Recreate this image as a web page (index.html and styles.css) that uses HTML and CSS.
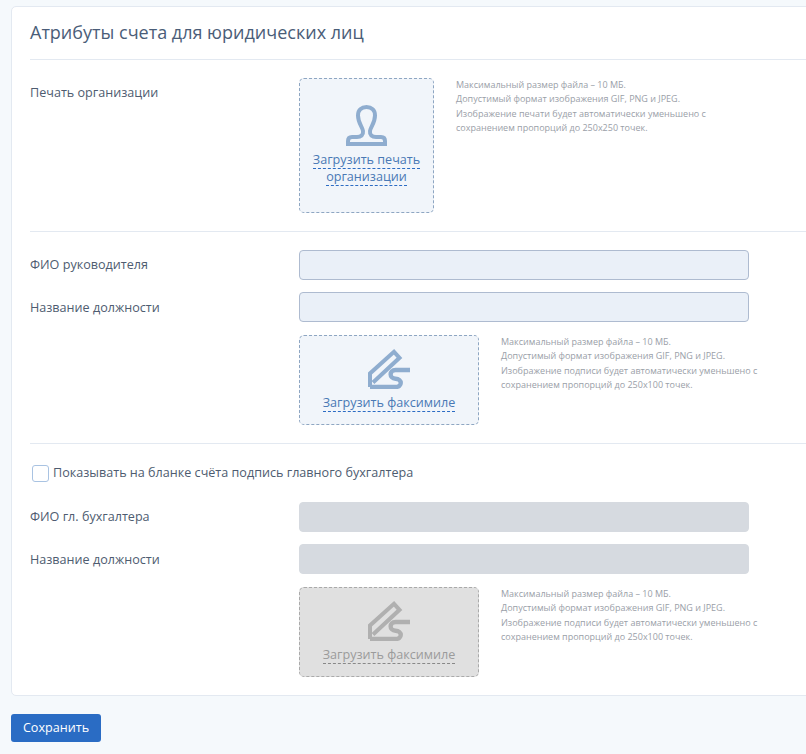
FILE: index.html
```html
<!DOCTYPE html>
<html lang="ru">
<head>
    <meta charset="UTF-8">
    <meta name="viewport" content="width=device-width, initial-scale=1.0">
    <title>Атрибуты счета</title>
    <link rel="stylesheet" href="styles.css">
</head>
<body>
    <svg class="icon-defs" width="0" height="0">
        <symbol id="icon-sign" viewBox="0 0 42 40">
            <path d="M2 38V24.500L26 2.800L31.500 8.800L5 33.500" fill="none" stroke="currentColor" stroke-width="4"/>
            <path d="M42 21H27.500C21 21 21 29.500 27.500 29.800C34.500 30 34.500 38 27.500 38H2" fill="none" stroke="currentColor" stroke-width="4.400"/>
        </symbol>
    </svg>
    <main class="page">
        <div class="card">
            <h1 class="card-title">Атрибуты счета для юридических лиц</h1>

            <section class="block block-stamp">
                <div class="stamp-row">
                    <label class="field-label">Печать организации</label>
                    <a class="upload upload-stamp">
                        <svg class="upload-icon" width="41" height="41" viewBox="0 0 41 41">
                            <path d="M2 39V36C2 33.500 3.500 32 6 32H11C15 32 17.500 30 17 26C16.500 22 12 18 12 10.500C12 5 15.500 2 20.500 2C25.500 2 29 5 29 10.500C29 18 24.500 22 24 26C23.500 30 26 32 30 32H35C37.500 32 39 33.500 39 36V39Z" fill="none" stroke="currentColor" stroke-width="4"/>
                        </svg>
                        <span class="upload-text"><span class="dashed">Загрузить печать</span> <span class="dashed">организации</span></span>
                    </a>
                    <div class="hint">
                        Максимальный размер файла – 10 МБ.<br>
                        Допустимый формат изображения GIF, PNG и JPEG.<br>
                        Изображение печати будет автоматически уменьшено с<br>
                        сохранением пропорций до 250х250 точек.
                    </div>
                </div>
            </section>

            <section class="block block-head">
                <div class="form-row">
                    <label class="field-label">ФИО руководителя</label>
                    <input class="text-input" type="text">
                </div>
                <div class="form-row">
                    <label class="field-label">Название должности</label>
                    <input class="text-input" type="text">
                </div>
                <div class="facsimile-row">
                    <a class="upload upload-sign">
                        <svg class="upload-icon" width="42" height="40"><use href="#icon-sign"/></svg>
                        <span class="upload-text"><span class="dashed">Загрузить факсимиле</span></span>
                    </a>
                    <div class="hint">
                        Максимальный размер файла – 10 МБ.<br>
                        Допустимый формат изображения GIF, PNG и JPEG.<br>
                        Изображение подписи будет автоматически уменьшено с<br>
                        сохранением пропорций до 250х100 точек.
                    </div>
                </div>
            </section>

            <section class="block-last">
                <label class="check-row">
                    <span class="checkbox"></span>
                    <span class="check-text">Показывать на бланке счёта подпись главного бухгалтера</span>
                </label>
                <div class="form-row">
                    <label class="field-label">ФИО гл. бухгалтера</label>
                    <input class="text-input" type="text" disabled>
                </div>
                <div class="form-row">
                    <label class="field-label">Название должности</label>
                    <input class="text-input" type="text" disabled>
                </div>
                <div class="facsimile-row">
                    <a class="upload upload-sign upload-disabled">
                        <svg class="upload-icon" width="42" height="40"><use href="#icon-sign"/></svg>
                        <span class="upload-text"><span class="dashed">Загрузить факсимиле</span></span>
                    </a>
                    <div class="hint">
                        Максимальный размер файла – 10 МБ.<br>
                        Допустимый формат изображения GIF, PNG и JPEG.<br>
                        Изображение подписи будет автоматически уменьшено с<br>
                        сохранением пропорций до 250х100 точек.
                    </div>
                </div>
            </section>
        </div>
        <button class="btn-save" type="button">Сохранить</button>
    </main>
</body>
</html>
```

FILE: styles.css
```css
html,
body {
    margin: 0;
    padding: 0;
    background-color: #f5f9fc;
}

body {
    font-family: "Open Sans", sans-serif;
    font-size: 12.6px;
    color: #4a5a70;
    overflow: hidden;
}

.icon-defs {
    position: absolute;
}

.page {
    width: 806px;
    height: 754px;
    padding: 6px 0 0 11px;
    box-sizing: border-box;
    overflow: hidden;
}

.card {
    width: 840px;
    height: 690px;
    box-sizing: border-box;
    padding: 0 18px;
    background-color: white;
    border: 1px solid #e3e9f1;
    border-radius: 5px;
}

.card-title {
    margin: 0;
    height: 52px;
    line-height: 50px;
    font-size: 18px;
    font-weight: 400;
    color: #4a5d78;
    border-bottom: 1px solid #e3e9f1;
}

.block {
    border-bottom: 1px solid #e3e9f1;
}

.block-stamp {
    height: 172px;
    padding-top: 18px;
    box-sizing: border-box;
}

.stamp-row {
    display: flex;
    align-items: flex-start;
}

.field-label {
    width: 269px;
    flex-shrink: 0;
    color: #4e5c70;
    line-height: 18px;
}

.stamp-row .field-label {
    padding-top: 6px;
}

.form-row + .form-row .field-label {
    padding-top: 2px;
}

.upload {
    display: flex;
    flex-direction: column;
    align-items: center;
    flex-shrink: 0;
    box-sizing: border-box;
    color: #4a79b5;
    background-color: #f1f5fa;
    border: 1px dashed #8ea6c2;
    border-radius: 5px;
    text-align: center;
    line-height: 16px;
}

.upload-icon {
    display: block;
    color: #8fadcf;
    margin-bottom: 6px;
}

.upload-stamp {
    width: 135px;
    height: 135px;
    padding-top: 26px;
}

.upload-sign {
    width: 180px;
    height: 90px;
    padding-top: 13px;
}

.upload-text {
    display: block;
    width: 120px;
}

.upload-sign .upload-text {
    width: auto;
}

.dashed {
    border-bottom: 1px dashed #2c6cc4;
    display: inline-block;
    white-space: nowrap;
}

.hint {
    margin-left: 22px;
    font-size: 9px;
    line-height: 14.4px;
    color: #9aa0a8;
    white-space: nowrap;
}

.block-head {
    height: 212px;
    padding-top: 18px;
    box-sizing: border-box;
}

.form-row {
    display: flex;
    align-items: center;
    height: 30px;
    margin-bottom: 12px;
}

.text-input {
    width: 450px;
    height: 30px;
    box-sizing: border-box;
    margin: 0;
    padding: 0 8px;
    background-color: #eaf0f8;
    border: 1px solid #aebbd0;
    border-radius: 4px;
}

.text-input:disabled {
    background-color: #d6dae0;
    border-color: #d6dae0;
}

.facsimile-row {
    display: flex;
    align-items: flex-start;
    margin-left: 269px;
    margin-top: 13px;
}

.check-row {
    display: flex;
    align-items: center;
    gap: 4px;
    margin: 21px 0 20px 2px;
    height: 17px;
    line-height: 17px;
    color: #4e5c70;
}

.check-text {
    padding-bottom: 2px;
}

.checkbox {
    width: 17px;
    height: 17px;
    box-sizing: border-box;
    background-color: white;
    border: 1px solid #a9c3e2;
    border-radius: 3px;
}

.upload-disabled {
    color: #9b9b9b;
    background-color: #e0e0e0;
    border-color: #aaaaaa;
}

.upload-disabled .upload-icon {
    color: #b0b0b0;
}

.upload-disabled .dashed {
    border-bottom-color: #888888;
}

.btn-save {
    display: block;
    width: 90px;
    height: 28px;
    margin-top: 18px;
    padding: 0 0 2px;
    font-family: inherit;
    font-size: 12.6px;
    color: white;
    background-color: #2a6cc4;
    border: none;
    border-radius: 3px;
}
```
